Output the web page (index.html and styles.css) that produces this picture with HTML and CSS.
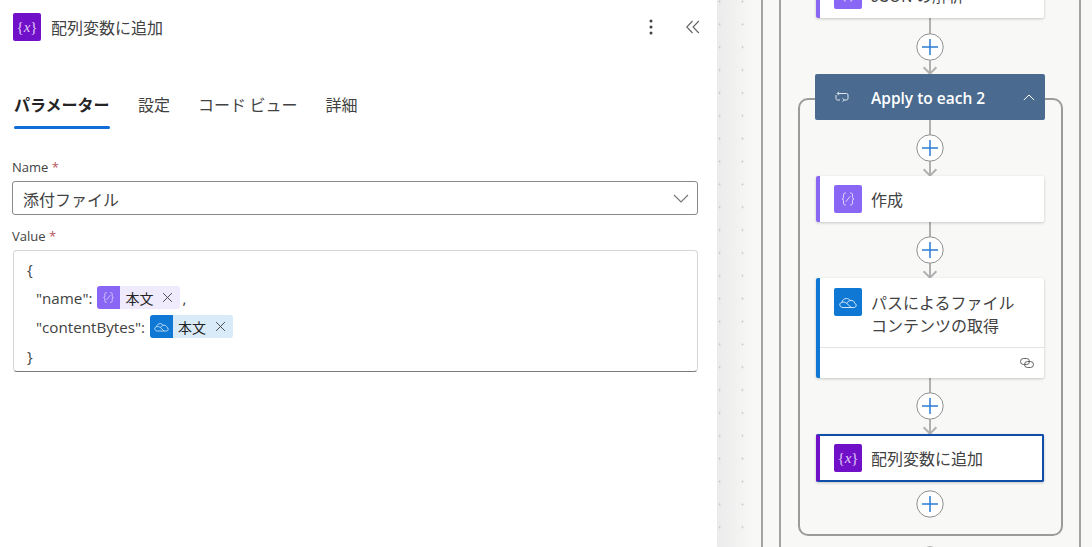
FILE: index.html
```html
<!DOCTYPE html>
<html lang="ja">
<head>
<meta charset="utf-8">
<title>配列変数に追加</title>
<link rel="stylesheet" href="styles.css">
</head>
<body>
<svg class="defs" width="0" height="0" aria-hidden="true">
  <defs>
    <symbol id="i-var" viewBox="0 0 28 28">
      <text x="14" y="18.5" text-anchor="middle" class="var-glyph">{<tspan class="var-x">x</tspan>}</text>
    </symbol>
    <symbol id="i-compose" viewBox="0 0 28 28">
      <path d="M11.5 8c-1.6 0-2 .7-2 2v2.400c0 1-.5 1.400-1.500 1.600 1 .2 1.500.6 1.500 1.600V18c0 1.300.4 2 2 2M16.500 8c1.600 0 2 .7 2 2v2.400c0 1 .5 1.400 1.500 1.600-1 .2-1.500.6-1.500 1.600V18c0 1.300-.4 2-2 2M12 16.500l4-5" fill="none" stroke="#fff" stroke-opacity=".7" stroke-width="1" stroke-linecap="round"/>
    </symbol>
    <symbol id="i-cloud" viewBox="0 0 28 28">
      <path d="M9 19.500c-1.900 0-3.200-1.200-3.200-2.700 0-1.400 1-2.400 2.300-2.600.3-2.200 2-3.700 4.300-3.700 1.500 0 2.900.7 3.700 2 2.600-.5 4.400.8 4.600 2.800.9.3 1.500 1 1.500 1.900 0 1.300-1 2.300-2.300 2.300zM8.100 14.200c1.700-.4 3.200.1 4.600 1.200l4.600 4.100M12.700 15.400c.8-1.500 2-2.400 3.400-2.700" fill="none" stroke="#fff" stroke-opacity=".9" stroke-width=".9" stroke-linejoin="round"/>
    </symbol>
    <symbol id="i-x" viewBox="0 0 12 12">
      <path d="M1.500 1.500l9 9M10.500 1.500l-9 9" fill="none" stroke="#424242" stroke-width="1" stroke-linecap="round"/>
    </symbol>
    <symbol id="i-plus" viewBox="0 0 28 28">
      <circle cx="14" cy="14" r="13.200" fill="#fff" stroke="#8f8f8f" stroke-width="1"/>
      <path d="M14 6v16M6 14h16" fill="none" stroke="#2b7cd3" stroke-width="1.500"/>
    </symbol>
  </defs>
</svg>

<main class="app">
  <section class="panel">
    <header class="panel-head">
      <span class="tile tile-var"><svg class="tile-svg"><use href="#i-var"/></svg></span>
      <h1 class="panel-title">配列変数に追加</h1>
      <button class="icon-btn more" aria-label="その他">
        <svg width="4" height="16" viewBox="0 0 4 16"><circle cx="2" cy="2" r="1.500"/><circle cx="2" cy="8" r="1.500"/><circle cx="2" cy="14" r="1.500"/></svg>
      </button>
      <button class="icon-btn collapse" aria-label="折りたたむ">
        <svg width="14" height="14" viewBox="0 0 14 14"><path d="M6.500 1L.8 7l5.700 6M12.800 1L7.100 7l5.700 6" fill="none" stroke="#616161" stroke-width="1.100"/></svg>
      </button>
    </header>

    <nav class="tabs">
      <a class="tab tab-active">パラメーター</a>
      <a class="tab">設定</a>
      <a class="tab">コード ビュー</a>
      <a class="tab">詳細</a>
    </nav>

    <div class="form">
      <label class="label">Name <span class="req">*</span></label>
      <div class="select">
        <span>添付ファイル</span>
        <svg width="16" height="9" viewBox="0 0 16 9"><path d="M1 1l7 7 7-7" fill="none" stroke="#757575" stroke-width="1.100"/></svg>
      </div>
      <label class="label label-value">Value <span class="req">*</span></label>
      <div class="editor">
        <div class="line">{</div>
        <div class="line indent">
          <span>"name":</span>
          <span class="token token-purple"><span class="token-ico"><svg width="23" height="23"><use href="#i-compose"/></svg></span><span class="token-text">本文</span><svg class="token-x" width="11" height="11"><use href="#i-x"/></svg></span>
          <span class="comma">,</span>
        </div>
        <div class="line indent">
          <span>"contentBytes":</span>
          <span class="token token-blue"><span class="token-ico"><svg width="23" height="23"><use href="#i-cloud"/></svg></span><span class="token-text">本文</span><svg class="token-x" width="11" height="11"><use href="#i-x"/></svg></span>
        </div>
        <div class="line">}</div>
      </div>
    </div>
  </section>

  <section class="canvas">
    <div class="dots"></div>
    <div class="rail rail-l"></div>
    <div class="rail rail-m"></div>
    <div class="rail rail-r"></div>
    <div class="loop"></div>

    <div class="wire w1"></div>
    <div class="wire w2"></div>
    <div class="wire w3"></div>
    <div class="wire w4"></div>

    <div class="arrow a1"></div>
    <div class="arrow a2"></div>
    <div class="arrow a3"></div>
    <div class="arrow a4"></div>

    <svg class="plus p1"><use href="#i-plus"/></svg>
    <svg class="plus p2"><use href="#i-plus"/></svg>
    <svg class="plus p3"><use href="#i-plus"/></svg>
    <svg class="plus p4"><use href="#i-plus"/></svg>
    <svg class="plus p5"><use href="#i-plus"/></svg>
    <svg class="plus p6"><use href="#i-plus"/></svg>

    <div class="card card-json accent-purple">
      <span class="tile tile-compose"><svg class="tile-svg"><use href="#i-compose"/></svg></span>
      <span class="card-text">JSON の解析</span>
    </div>

    <div class="card-loop">
      <svg width="14" height="12" viewBox="0 0 14 12"><path d="M2.500 2.500h9a1.500 1.500 0 0 1 1.500 1.500v3.500a1.500 1.500 0 0 1-1.500 1.500H9M5 9H2.500A1.500 1.500 0 0 1 1 7.500V4M3.800.8L2.300 2.500l1.500 1.700M7.700 7.300L9.200 9l-1.500 1.700" fill="none" stroke="#dfe7ef" stroke-width="1"/></svg>
      <span class="loop-text">Apply to each 2</span>
      <svg class="loop-chev" width="12" height="7" viewBox="0 0 12 7"><path d="M.8 6L6 1l5.200 5" fill="none" stroke="#fff" stroke-width="1"/></svg>
    </div>

    <div class="card card-compose accent-purple">
      <span class="tile tile-compose"><svg class="tile-svg"><use href="#i-compose"/></svg></span>
      <span class="card-text">作成</span>
    </div>

    <div class="card card-file accent-blue">
      <div class="file-main">
        <span class="tile tile-cloud"><svg class="tile-svg"><use href="#i-cloud"/></svg></span>
        <span class="card-text">パスによるファイル<br>コンテンツの取得</span>
      </div>
      <div class="file-foot">
        <svg width="14" height="10" viewBox="0 0 14 10"><rect x=".5" y=".5" width="9" height="6" rx="3" fill="none" stroke="#616161" stroke-width="1"/><rect x="4.500" y="3.500" width="9" height="6" rx="3" fill="none" stroke="#616161" stroke-width="1"/></svg>
      </div>
    </div>

    <div class="card card-append accent-violet">
      <span class="tile tile-var"><svg class="tile-svg"><use href="#i-var"/></svg></span>
      <span class="card-text">配列変数に追加</span>
    </div>
  </section>
</main>
</body>
</html>
```
FILE: styles.css
```css
* { box-sizing: border-box; }
html, body { margin: 0; height: 100%; overflow: hidden; }
body {
  font-family: "Open Sans", "Noto Sans CJK JP", sans-serif;
  color: #242424;
  background: #fff;
}
.defs { position: absolute; }
.app { display: flex; width: 1092px; height: 547px; }

/* Left panel */
.panel { width: 717px; flex: none; background: #fff; padding: 13px 12px 0 12px; }
.panel-head { display: flex; align-items: center; height: 28px; padding: 0 5px 0 1px; }
.panel-title {
  margin: 0 0 0 10px; flex: 1;
  font-size: 16px; font-weight: 400; color: #424242;
  font-family: "Noto Sans CJK JP", sans-serif;
}
.icon-btn { border: 0; background: none; padding: 0; display: flex; align-items: center; }
.more { margin-right: 33px; fill: #424242; }

.tile {
  width: 28px; height: 28px; flex: none; border-radius: 2px;
  display: flex; align-items: center; justify-content: center;
}
.tile-svg { width: 28px; height: 28px; display: block; }
.tile-var { background: #7010c8; }
.tile-compose { background: #8a66f5; }
.tile-cloud { background: #0f78d4; }
.var-glyph { font-family: "Liberation Serif", serif; font-size: 15px; fill: #e0c8f6; }
.var-x { font-style: italic; }

.tabs { display: flex; gap: 28px; margin-top: 41px; padding-left: 2px; height: 47px; font-family: "Noto Sans CJK JP", sans-serif; }
.tab { display: block; height: 47px; padding-top: 10px; font-size: 16px; line-height: 24px; color: #424242; white-space: nowrap; }
.tab-active { font-weight: 700; color: #242424; position: relative; width: 96px; }
.tab-active::after {
  content: ""; position: absolute; left: 0; right: 0; bottom: 0;
  height: 3.500px; border-radius: 2px; background: #0f6cd8;
}

.form { margin-top: 29px; width: 686px; }
.label { display: block; height: 18px; font-size: 13px; line-height: 18px; color: #424242; }
.label-value { margin-top: 12px; }
.req { color: #b4555a; }
.select {
  margin-top: 5px; height: 34px; padding: 1px 8px 0 10px;
  display: flex; align-items: center; justify-content: space-between;
  border: 1px solid #8a8a8a; border-radius: 3px;
  font-family: "Noto Sans CJK JP", sans-serif; font-size: 16px; color: #424242;
}
.editor {
  margin: 5px 0 0 1px; height: 122px; padding-top: 3px;
  border: 1px solid #d6d6d6; border-bottom-color: #7a7a7a; border-radius: 4px;
  font-size: 15.200px; color: #424242;
}
.line { height: 29px; display: flex; align-items: center; padding-left: 13px; white-space: nowrap; }
.indent { padding-left: 22px; gap: 5px; }
.token {
  display: inline-flex; align-items: center; height: 23px; border-radius: 3px;
  width: 83px; overflow: hidden;
  font-family: "Noto Sans CJK JP", sans-serif; font-size: 14px; color: #242424;
}
.token-purple { background: #efeafc; }
.token-blue { background: #d9eaf8; }
.token-ico { width: 23px; height: 23px; display: flex; align-items: center; justify-content: center; flex: none; }
.token-purple .token-ico { background: #8a66f5; }
.token-blue .token-ico { background: #0f78d4; }
.token-text { margin-left: 5px; }
.token-x { margin-left: 9px; }
.comma { margin-left: -3px; }

/* Canvas: a free diagram, nodes placed by coordinates */
.canvas {
  position: relative; flex: 1; overflow: hidden;
  background: #f8f8f7;
}
.dots {
  position: absolute; left: 0; top: 0; bottom: 0; width: 44px;
  background-image:
    radial-gradient(circle at 2.500px 1.500px, #c9c9c9 .8px, transparent 1.200px),
    linear-gradient(90deg, #ebebeb, #f8f8f7 36px);
  background-size: 23px 22.870px, 100% 100%;
  background-position: 0 0, 0 0;
}
.rail { position: absolute; top: 0; bottom: 0; width: 2px; background: #a3a3a3; }
.rail-l { left: 44px; }
.rail-m { left: 62px; }
.rail-r { left: 362px; }
.loop {
  position: absolute; left: 81px; top: 98px; width: 265px; height: 438px;
  border: 2px solid #9b9b9b; border-radius: 10px;
}
.wire { position: absolute; left: 212px; width: 2px; background: #b0b0b0; }
.w1 { top: 18px; height: 55px; }
.w2 { top: 120px; height: 55px; }
.w3 { top: 222px; height: 56px; }
.w4 { top: 378px; height: 56px; }
.arrow {
  position: absolute; left: 208px; width: 10px; height: 10px;
  border-right: 2px solid #b0b0b0; border-bottom: 2px solid #b0b0b0;
  transform: rotate(45deg);
}
.a1 { top: 63px; }
.a2 { top: 165px; }
.a3 { top: 267px; }
.a4 { top: 423px; }
.plus { position: absolute; left: 199px; width: 28px; height: 28px; }
.p1 { top: 33px; }
.p2 { top: 134px; }
.p3 { top: 236px; }
.p4 { top: 392px; }
.p5 { top: 490px; }
.p6 { top: 546px; }

.card {
  position: absolute; left: 99px; width: 228px; background: #fff;
  border-left: 4px solid; border-radius: 2px;
  box-shadow: 0 1px 3px rgba(0,0,0,.2);
}
.accent-purple { border-left-color: #8a66f5; }
.accent-blue { border-left-color: #0f78d4; }
.accent-violet { border-left-color: #7010c8; }
.card-json, .card-compose, .card-append { display: flex; align-items: center; height: 46px; padding-left: 14px; }
.card-json { top: -28px; }
.card-compose { top: 176px; }
.card-append { top: 434px; height: 48px; border: 2px solid #0f4fa8; border-left: 4px solid #7010c8; }
.card-text {
  margin-left: 9px; font-family: "Noto Sans CJK JP", sans-serif;
  font-size: 16px; line-height: 23px; color: #424242;
}
.card-file { top: 278px; height: 100px; }
.file-main { display: flex; height: 70px; padding: 10px 0 0 14px; border-bottom: 1px solid #e3e3e3; }
.file-main .card-text { padding-top: 3px; }
.file-foot { display: flex; justify-content: flex-end; padding: 10px 10px 0 0; }

.card-loop {
  position: absolute; left: 98px; top: 74px; width: 230px; height: 46px;
  display: flex; align-items: center; padding-left: 20px;
  background: #4a6a8f; border-radius: 2px; color: #fff;
}
.loop-text { margin-left: 22px; padding-top: 1px; font-size: 15.500px; font-weight: 600; white-space: nowrap; }
.loop-chev { margin-left: auto; margin-right: 10px; }
```
